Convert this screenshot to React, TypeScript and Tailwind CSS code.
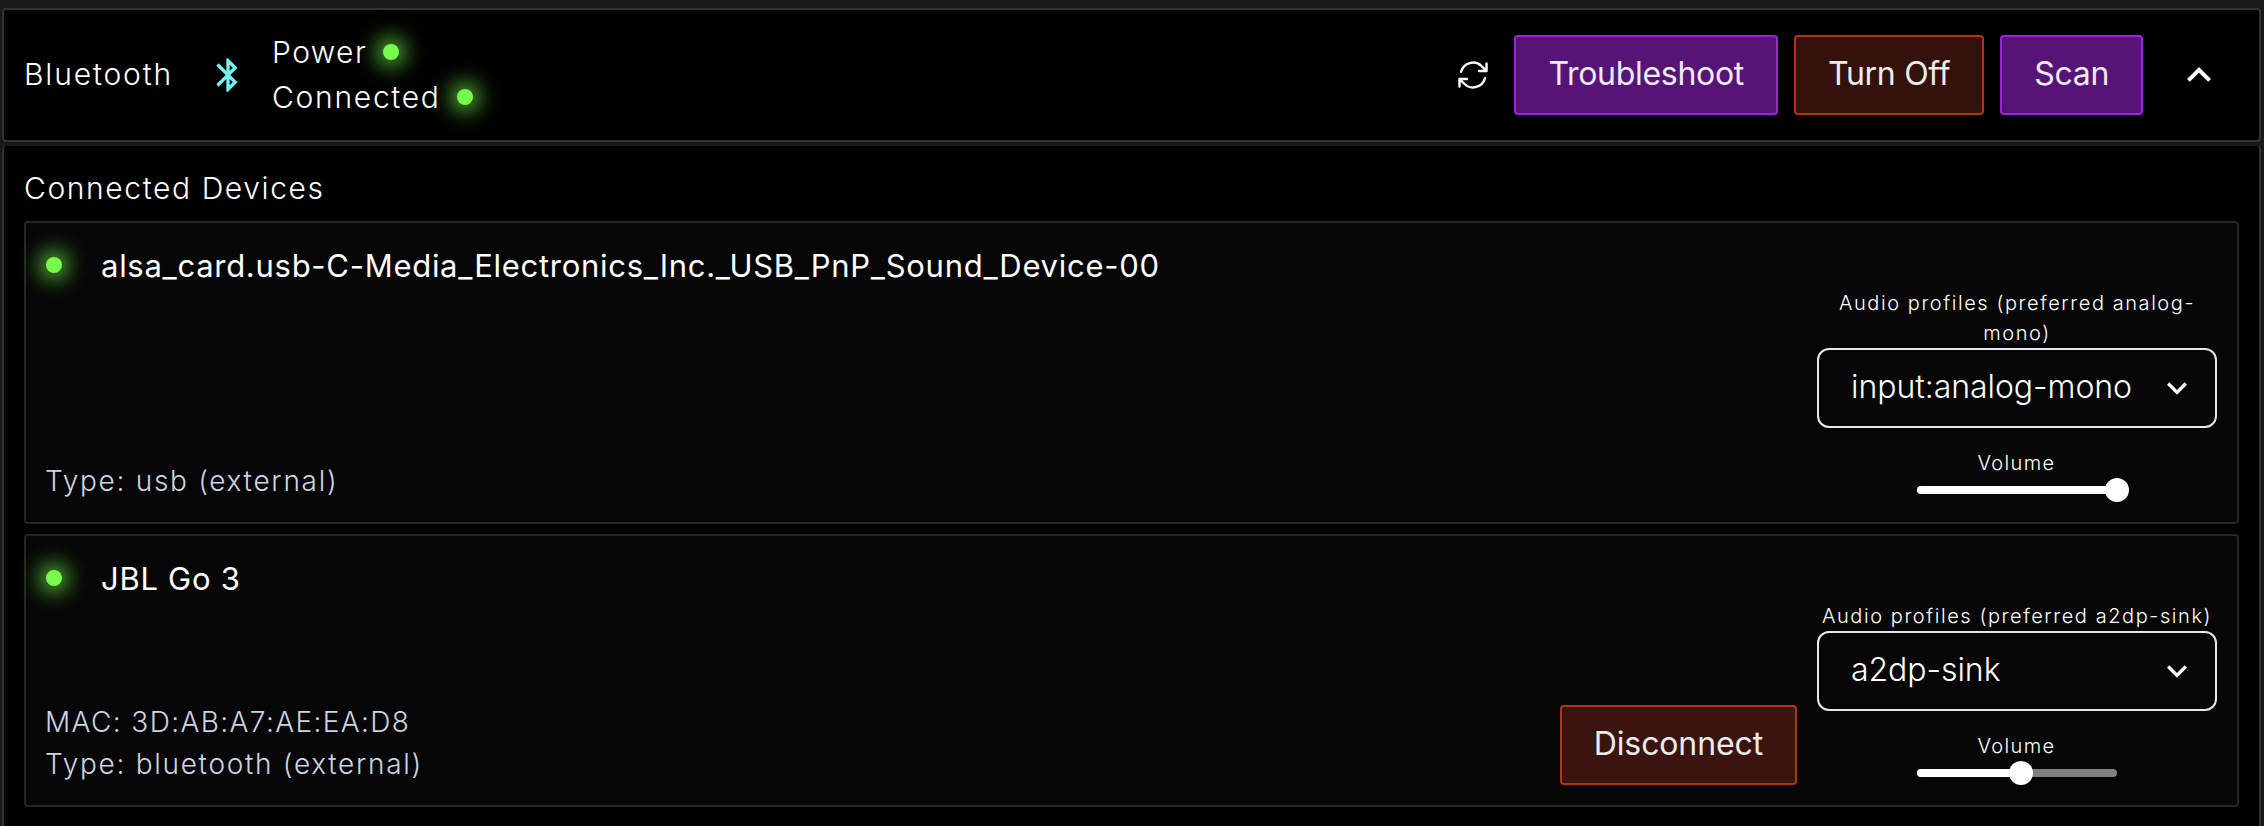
import React from "react";

type Device = {
  name: string;
  mac?: string;
  type: string;
  preferredLabel: string;
  profile: string;
  volume: number;
  connected?: boolean;
};

const devices: Device[] = [
  {
    name: "alsa_card.usb-C-Media_Electronics_Inc._USB_PnP_Sound_Device-00",
    type: "usb (external)",
    preferredLabel: "Audio profiles (preferred analog-mono)",
    profile: "input:analog-mono",
    volume: 100,
  },
  {
    name: "JBL Go 3",
    mac: "3D:AB:A7:AE:EA:D8",
    type: "bluetooth (external)",
    preferredLabel: "Audio profiles (preferred a2dp-sink)",
    profile: "a2dp-sink",
    volume: 52,
    connected: true,
  },
];

function Led() {
  return (
    <span className="mb-[2px] block size-4 shrink-0 rounded-full bg-[#77fb4c] shadow-[0_0_22px_5px_rgba(119,251,76,0.9)]" />
  );
}

const tones = {
  purple: "border-[#9a23dc] bg-[#571477] tracking-[-0.3px]",
  red: "border-[#b03418] bg-[#34110a] tracking-[-0.3px]",
  redSoft: "border-[#b03418] bg-[#3a150f] tracking-[-0.12px]",
};

function Button({ tone, children }: { tone: keyof typeof tones; children: React.ReactNode }) {
  return (
    <button
      className={`h-20 shrink-0 whitespace-nowrap rounded-[4px] border-2 px-8 pb-[2px] text-[32px] font-normal leading-[48px] text-[#ececec] ${tones[tone]}`}
    >
      {children}
    </button>
  );
}

function Volume({ value }: { value: number }) {
  return (
    <div className="mt-5 flex flex-col items-center pb-2">
      <span className="mr-px text-[20px] leading-[30px] tracking-[1.4px]">Volume</span>
      <div className="mt-2 flex h-2 w-[200px] items-center rounded-full bg-[#808080]">
        <div className="h-2 shrink-0 rounded-l-full bg-white" style={{ width: `${value}%` }} />
        <div className="-ml-3 size-6 shrink-0 rounded-full bg-white" />
      </div>
    </div>
  );
}

function DeviceCard({ device }: { device: Device }) {
  return (
    <div className="flex flex-col rounded-[4px] border-2 border-[#262626] bg-[#060606] p-5">
      <div className="flex items-center">
        <Led />
        <h3 className="ml-[39px] text-[31px] font-normal leading-[45px] tracking-[0.72px]">{device.name}</h3>
      </div>
      <div className="flex items-end justify-between">
        <div className="-ml-px text-[28px] leading-[42px] text-[#cbd5e1]">
          {device.mac && <div className="tracking-[1.38px]">MAC: {device.mac}</div>}
          <div className="tracking-[1.7px]">Type: {device.type}</div>
        </div>
        <div className="flex items-end gap-5">
          {device.connected && <Button tone="redSoft">Disconnect</Button>}
          <div className="flex w-[400px] flex-col">
            <span className="text-center text-[20px] leading-[30px] tracking-[1.57px]">{device.preferredLabel}</span>
            <div className="flex h-20 items-center justify-between rounded-xl border-2 border-[#e2e8f0] pl-8 pr-[18px]">
              <span className="pb-[3px] text-[32px] leading-[48px] tracking-[-0.05px]">{device.profile}</span>
              <svg width="40" height="40" viewBox="0 0 24 24" fill="#fff" className="shrink-0">
                <path d="M7.41 8.59L12 13.17l4.59-4.58L18 10l-6 6-6-6 1.41-1.41z" />
              </svg>
            </div>
            <Volume value={device.volume} />
          </div>
        </div>
      </div>
    </div>
  );
}

export default function App() {
  return (
    <div className="flex h-[826px] w-[2264px] flex-col overflow-hidden bg-[#191919] pl-[2px] pr-[3px] pt-2 font-['Inter',sans-serif] font-light text-white">
      <header className="flex h-[134px] shrink-0 items-center justify-between rounded-[4px] border-2 border-[#333] bg-black pl-5 pr-9">
        <div className="flex items-center text-[30px] leading-[45px]">
          <span className="pb-[2px] tracking-[1.85px]">Bluetooth</span>
          <svg width="40" height="40" viewBox="0 0 24 24" fill="#6ff7f0" className="ml-[35px]">
            <path d="M17.71 7.71L12 2h-1v7.59L6.41 5 5 6.41 10.59 12 5 17.59 6.41 19 11 14.41V22h1l5.71-5.71-4.3-4.29 4.3-4.29zM13 5.83l1.88 1.88L13 9.59V5.83zm1.88 10.46L13 18.17v-3.76l1.88 1.88z" />
          </svg>
          <div className="ml-[24px] flex flex-col">
            <div className="flex items-center gap-4 tracking-[1.4px]">
              Power <Led />
            </div>
            <div className="flex items-center gap-4 tracking-[1.7px]">
              Connected <Led />
            </div>
          </div>
        </div>
        <div className="flex items-center">
          <svg
            width="36"
            height="36"
            viewBox="0 0 24 24"
            fill="none"
            stroke="#fff"
            strokeWidth="1.6"
            strokeLinecap="round"
            strokeLinejoin="round"
            className="mr-[23px]"
          >
            <path d="M16.023 9.348h4.992v-.001M2.985 19.644v-4.992m0 0h4.992m-4.993 0 3.181 3.183a8.25 8.25 0 0 0 13.803-3.7M4.031 9.865a8.25 8.25 0 0 1 13.803-3.7l3.181 3.182m0-4.991v4.99" />
          </svg>
          <div className="flex gap-4">
            <Button tone="purple">Troubleshoot</Button>
            <Button tone="red">Turn Off</Button>
            <Button tone="purple">Scan</Button>
          </div>
          <svg width="48" height="48" viewBox="0 0 24 24" fill="#fff" className="ml-8 shrink-0">
            <path d="M7.41 15.41L12 10.83l4.59 4.58L18 14l-6-6-6 6z" />
          </svg>
        </div>
      </header>
      <section className="mt-[4px] flex h-[800px] shrink-0 flex-col rounded-[4px] border-x-2 border-[#333] bg-black px-5 pt-5">
        <h2 className="text-[30px] leading-[45px] tracking-[1.6px]">Connected Devices</h2>
        <div className="mt-[10px] flex flex-col gap-[10px]">
          {devices.map((d) => (
            <DeviceCard key={d.name} device={d} />
          ))}
        </div>
      </section>
    </div>
  );
}
